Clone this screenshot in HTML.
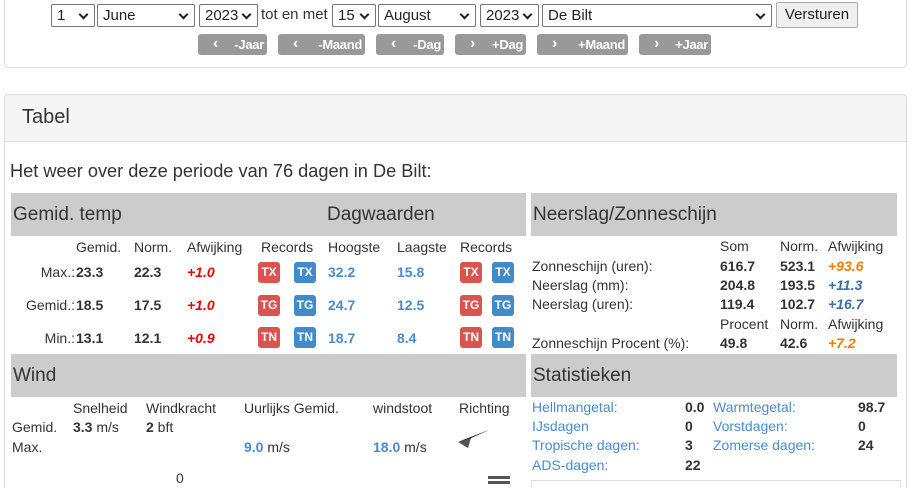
<!DOCTYPE html>
<html style="overflow:hidden;height:488px"><head><meta charset="utf-8"><style>
*{margin:0;padding:0;box-sizing:border-box}
body{width:912px;height:488px;overflow:hidden;background:#fff;font-family:"Liberation Sans",sans-serif;color:#333;position:relative;font-size:14px}
.a{position:absolute;white-space:nowrap;line-height:20px}
.sel{position:absolute;top:4px;height:23px;border:1px solid #767676;border-radius:2px;background:#fff;font-size:15px;line-height:21px;padding-left:5px;color:#222}
.sel:after{content:"";position:absolute;right:7px;top:6px;width:5px;height:5px;border-right:2px solid #222;border-bottom:2px solid #222;transform:rotate(45deg)}
.btn{position:absolute;top:34px;height:21px;background:#999;border-radius:3px;color:#fff;font-weight:bold;font-size:13px;line-height:21px;text-align:right;padding-right:3px;letter-spacing:-0.3px}
.btn i{position:absolute;top:-1px;font-style:normal;font-size:16px}
.bar{position:absolute;background:#ccc;height:43px;font-size:19px;line-height:43px;padding-left:2px;color:#333}
.b{font-weight:bold}
.r{color:#e00;font-style:italic;font-weight:bold}
.o{color:#f07d00;font-style:italic;font-weight:bold}
.bl{color:#3a6fa8;font-style:italic;font-weight:bold}
.lb{color:#4a8bd0}
.lbb{color:#4a8bd0;font-weight:bold}
.bd{position:absolute;width:22px;height:21px;border-radius:3px;color:#fff;font-weight:bold;font-size:12px;line-height:21px;text-align:center}
.rd{background:#d9534f}.bu{background:#428bca}
</style></head><body>
<div style="position:absolute;left:4px;top:-5px;width:903px;height:73px;border:1px solid #ddd;border-radius:4px"></div>
<div class="sel" style="left:51px;width:44px">1</div>
<div class="sel" style="left:97px;width:98px">June</div>
<div class="sel" style="left:199px;width:59px">2023</div>
<div class="a" style="left:261px;top:5px;font-size:15px">tot en met</div>
<div class="sel" style="left:332px;width:44px">15</div>
<div class="sel" style="left:378px;width:98px">August</div>
<div class="sel" style="left:480px;width:59px">2023</div>
<div class="sel" style="left:542px;width:230px">De Bilt</div>
<div style="position:absolute;left:776px;top:2px;width:82px;height:26px;border:1px solid #aaa;border-radius:2px;background:#efefef;font-size:15px;line-height:24px;text-align:center;color:#222">Versturen</div>
<div class="btn" style="left:198px;width:69px"><i style="left:15px">‹</i>-Jaar</div>
<div class="btn" style="left:278px;width:87px"><i style="left:15px">‹</i>-Maand</div>
<div class="btn" style="left:376px;width:68px"><i style="left:15px">‹</i>-Dag</div>
<div class="btn" style="left:455px;width:71px"><i style="left:15px">›</i>+Dag</div>
<div class="btn" style="left:537px;width:91px"><i style="left:15px">›</i>+Maand</div>
<div class="btn" style="left:639px;width:72px"><i style="left:15px">›</i>+Jaar</div>

<div style="position:absolute;left:4px;top:94px;width:903px;height:394px;border:1px solid #ddd;border-bottom:none;border-radius:4px 4px 0 0;overflow:hidden">
<div style="height:47px;background:#f5f5f5;border-bottom:1px solid #ddd"></div></div>
<div class="a" style="left:22px;top:107px;font-size:20px">Tabel</div>
<div class="a" style="left:10px;top:161px;font-size:18.2px">Het weer over deze periode van 76 dagen in De Bilt:</div>

<div class="bar" style="left:11px;top:193px;width:515px">Gemid. temp<span style="position:absolute;left:316px">Dagwaarden</span></div>
<div class="bar" style="left:531px;top:193px;width:366px">Neerslag/Zonneschijn</div>
<div class="bar" style="left:11px;top:354px;width:515px">Wind</div>
<div class="bar" style="left:531px;top:354px;width:366px">Statistieken</div>

<div class="a" style="left:76px;top:237px">Gemid.</div>
<div class="a" style="left:134px;top:237px">Norm.</div>
<div class="a" style="left:187px;top:237px">Afwijking</div>
<div class="a" style="left:261px;top:237px">Records</div>
<div class="a" style="left:328px;top:237px">Hoogste</div>
<div class="a" style="left:397px;top:237px">Laagste</div>
<div class="a" style="left:460px;top:237px">Records</div>

<div class="a" style="right:837px;top:262px">Max.:</div><div class="a b" style="left:76px;top:262px">23.3</div>
<div class="a b" style="left:134px;top:262px">22.3</div><div class="a r" style="left:187px;top:262px">+1.0</div>
<div class="a lbb" style="left:328px;top:262px">32.2</div><div class="a lbb" style="left:397px;top:262px">15.8</div>
<div class="a" style="right:837px;top:295px">Gemid.:</div><div class="a b" style="left:76px;top:295px">18.5</div>
<div class="a b" style="left:134px;top:295px">17.5</div><div class="a r" style="left:187px;top:295px">+1.0</div>
<div class="a lbb" style="left:328px;top:295px">24.7</div><div class="a lbb" style="left:397px;top:295px">12.5</div>
<div class="a" style="right:837px;top:328px">Min.:</div><div class="a b" style="left:76px;top:328px">13.1</div>
<div class="a b" style="left:134px;top:328px">12.1</div><div class="a r" style="left:187px;top:328px">+0.9</div>
<div class="a lbb" style="left:328px;top:328px">18.7</div><div class="a lbb" style="left:397px;top:328px">8.4</div>

<div class="bd rd" style="left:258px;top:262px">TX</div><div class="bd bu" style="left:294px;top:262px">TX</div>
<div class="bd rd" style="left:460px;top:262px">TX</div><div class="bd bu" style="left:492px;top:262px">TX</div>
<div class="bd rd" style="left:258px;top:295px">TG</div><div class="bd bu" style="left:294px;top:295px">TG</div>
<div class="bd rd" style="left:460px;top:295px">TG</div><div class="bd bu" style="left:492px;top:295px">TG</div>
<div class="bd rd" style="left:258px;top:327px">TN</div><div class="bd bu" style="left:294px;top:327px">TN</div>
<div class="bd rd" style="left:460px;top:327px">TN</div><div class="bd bu" style="left:492px;top:327px">TN</div>

<div class="a" style="left:720px;top:236px">Som</div><div class="a" style="left:780px;top:236px">Norm.</div><div class="a" style="left:828px;top:236px">Afwijking</div>
<div class="a" style="left:532px;top:256px">Zonneschijn (uren):</div><div class="a b" style="left:720px;top:256px">616.7</div><div class="a b" style="left:780px;top:256px">523.1</div><div class="a o" style="left:828px;top:256px">+93.6</div>
<div class="a" style="left:532px;top:275px">Neerslag (mm):</div><div class="a b" style="left:720px;top:275px">204.8</div><div class="a b" style="left:780px;top:275px">193.5</div><div class="a bl" style="left:828px;top:275px">+11.3</div>
<div class="a" style="left:532px;top:294px">Neerslag (uren):</div><div class="a b" style="left:720px;top:294px">119.4</div><div class="a b" style="left:780px;top:294px">102.7</div><div class="a bl" style="left:828px;top:294px">+16.7</div>
<div class="a" style="left:720px;top:314px">Procent</div><div class="a" style="left:780px;top:314px">Norm.</div><div class="a" style="left:828px;top:314px">Afwijking</div>
<div class="a" style="left:532px;top:333px">Zonneschijn Procent (%):</div><div class="a b" style="left:720px;top:333px">49.8</div><div class="a b" style="left:780px;top:333px">42.6</div><div class="a o" style="left:828px;top:333px">+7.2</div>

<div class="a lb" style="left:532px;top:397px">Hellmangetal:</div><div class="a b" style="left:685px;top:397px">0.0</div><div class="a lb" style="left:713px;top:397px">Warmtegetal:</div><div class="a b" style="left:858px;top:397px">98.7</div>
<div class="a lb" style="left:532px;top:416px">IJsdagen</div><div class="a b" style="left:685px;top:416px">0</div><div class="a lb" style="left:713px;top:416px">Vorstdagen:</div><div class="a b" style="left:858px;top:416px">0</div>
<div class="a lb" style="left:532px;top:435px">Tropische dagen:</div><div class="a b" style="left:685px;top:435px">3</div><div class="a lb" style="left:713px;top:435px">Zomerse dagen:</div><div class="a b" style="left:858px;top:435px">24</div>
<div class="a lb" style="left:532px;top:455px">ADS-dagen:</div><div class="a b" style="left:685px;top:455px">22</div>
<div style="position:absolute;left:531px;top:480px;width:370px;height:8px;border:1px solid #ddd;border-bottom:none"></div>

<div class="a" style="left:73px;top:398px">Snelheid</div><div class="a" style="left:146px;top:398px">Windkracht</div><div class="a" style="left:244px;top:398px">Uurlijks Gemid.</div><div class="a" style="left:373px;top:398px">windstoot</div><div class="a" style="left:459px;top:398px">Richting</div>
<div class="a" style="left:12px;top:417px">Gemid.</div><div class="a" style="left:73px;top:417px"><b>3.3</b> m/s</div><div class="a" style="left:146px;top:417px"><b>2</b> bft</div>
<div class="a" style="left:12px;top:437px">Max.</div><div class="a" style="left:244px;top:437px"><b class="lb">9.0</b> m/s</div><div class="a" style="left:373px;top:437px"><b class="lb">18.0</b> m/s</div>
<svg style="position:absolute;left:456px;top:428px" width="36" height="24"><path d="M2 14 L33 2 L15 10 L12 20 Z" fill="#555"/><path d="M2 14 L33 2 L15 10 Z" fill="#111"/></svg>
<div class="a" style="left:176px;top:468px;height:20px;overflow:hidden">0</div>
<div style="position:absolute;left:488px;top:476px;width:22px;height:3px;background:#555;box-shadow:0 5px 0 #555"></div>
</body></html>
